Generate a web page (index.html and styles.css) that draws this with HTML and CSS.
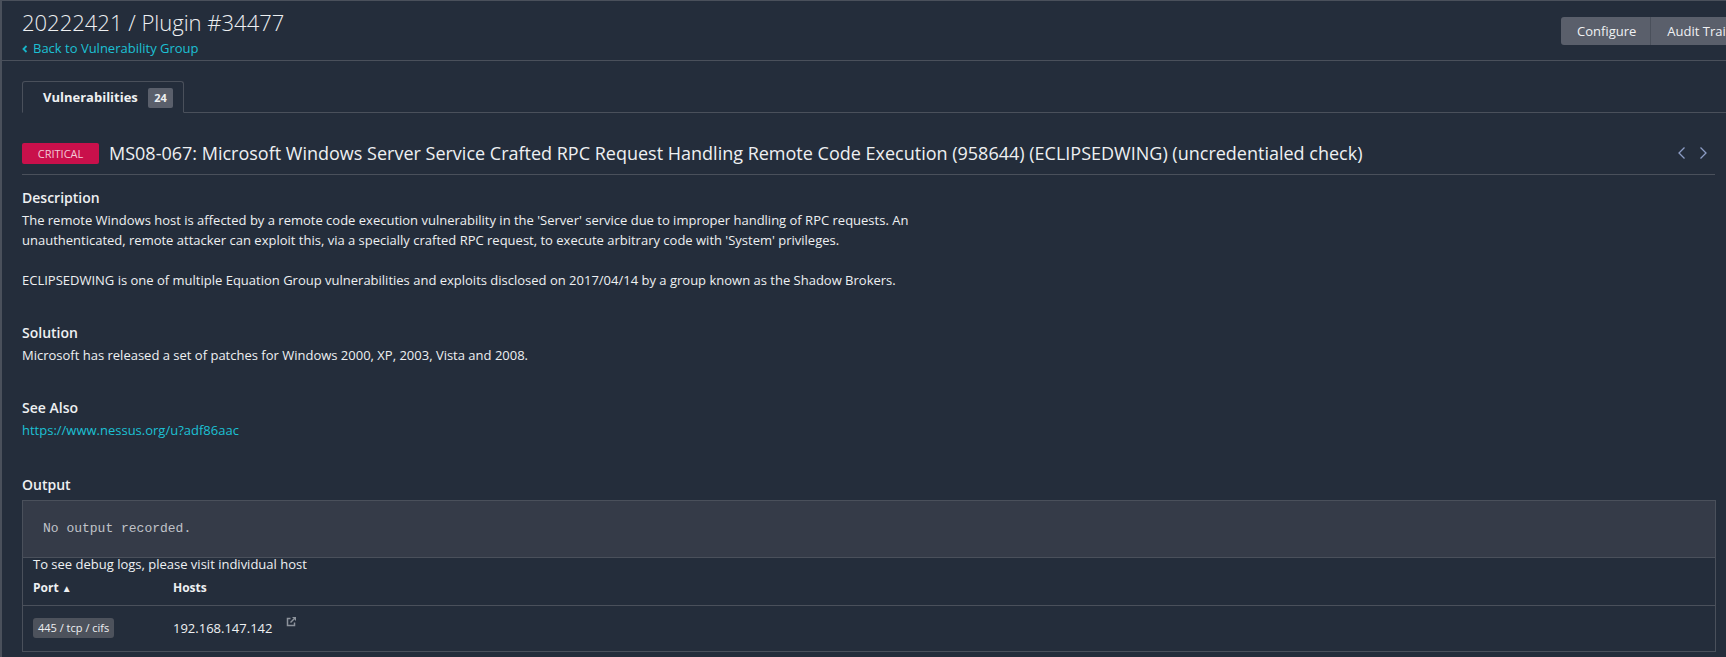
FILE: index.html
```html
<!DOCTYPE html>
<html lang="en">
<head>
    <meta charset="UTF-8">
    <title>Plugin #34477</title>
    <link rel="stylesheet" href="styles.css">
</head>
<body>

<div class="page-header">
    <div>
        <h1>20222421 / Plugin #34477</h1>
        <a class="back-link" href="#"><span class="back-arrow"><svg width="6" height="8" viewBox="0 0 6 8"><path d="M4.5 1 L1.5 4 L4.5 7" fill="none" stroke="#17b5c9" stroke-width="1.8"/></svg></span>Back to Vulnerability Group</a>
    </div>
    <div class="btn-group">
        <button class="btn">Configure</button>
        <button class="btn">Audit Trail</button>
    </div>
</div>

<div class="content">
    <div class="tabs">
        <div class="tab">Vulnerabilities <span class="tab-count">24</span></div>
    </div>

    <div class="plugin-title">
        <span class="severity">CRITICAL</span>
        <h2>MS08-067: Microsoft Windows Server Service Crafted RPC Request Handling Remote Code Execution (958644) (ECLIPSEDWING) (uncredentialed check)</h2>
        <div class="pager">
            <svg width="9" height="14" viewBox="0 0 9 14"><path d="M7.5 1.5 L2 7 L7.5 12.5" fill="none" stroke="#8c9cc4" stroke-width="1.3"/></svg>
            <svg width="9" height="14" viewBox="0 0 9 14"><path d="M1.5 1.5 L7 7 L1.5 12.5" fill="none" stroke="#8c9cc4" stroke-width="1.3"/></svg>
        </div>
    </div>

    <div class="block description">
        <h3>Description</h3>
        <p>The remote Windows host is affected by a remote code execution vulnerability in the 'Server' service due to improper handling of RPC requests. An unauthenticated, remote attacker can exploit this, via a specially crafted RPC request, to execute arbitrary code with 'System' privileges.</p>
        <p class="para-gap">ECLIPSEDWING is one of multiple Equation Group vulnerabilities and exploits disclosed on 2017/04/14 by a group known as the Shadow Brokers.</p>
    </div>

    <div class="block solution">
        <h3>Solution</h3>
        <p>Microsoft has released a set of patches for Windows 2000, XP, 2003, Vista and 2008.</p>
    </div>

    <div class="block">
        <h3>See Also</h3>
        <a class="link" href="#">https://www.nessus.org/u?adf86aac</a>
    </div>

    <div class="output-block">
        <h3>Output</h3>
        <div class="output-box">
            <pre class="output-text">No output recorded.</pre>
            <div class="debug-note">To see debug logs, please visit individual host</div>
            <div class="host-head">
                <div class="col-port">Port <span class="sort-arrow">▲</span></div>
                <div>Hosts</div>
            </div>
            <div class="host-row">
                <div class="col-port"><span class="port-tag">445 / tcp / cifs</span></div>
                <div class="host-ip">192.168.147.142</div>
                <svg class="ext-icon" width="11" height="11" viewBox="0 0 11 11"><path d="M8.5 6.5 V9.5 H1.5 V2.5 H4.5" fill="none" stroke="#8d939c" stroke-width="1.5"/><path d="M6 1 H10 V5 Z" fill="#8d939c"/><path d="M4.5 6.5 L8 3" stroke="#8d939c" stroke-width="1.5"/></svg>
            </div>
        </div>
    </div>
</div>

</body>
</html>
```

FILE: styles.css
```css
html, body {
    height: 100%;
}
body {
    margin: 0;
    background-color: #242d3b;
    border-top: 1px solid #4a505b;
    border-left: 2px solid #4a505b;
    box-sizing: border-box;
    color: #eef0f2;
    font-family: 'Open Sans', sans-serif;
    font-size: 13px;
    overflow: hidden;
}
.page-header {
    display: flex;
    justify-content: space-between;
    height: 60px;
    box-sizing: border-box;
    padding: 7px 0 0 20px;
    border-bottom: 1px solid #4a505b;
    overflow: hidden;
}
h1 {
    margin: 0;
    font-size: 22px;
    font-weight: 300;
    line-height: 28px;
    color: #eef0f2;
}
.back-link {
    display: block;
    margin-top: 3px;
    color: #1cc0d4;
    font-size: 13px;
    line-height: 18px;
    text-decoration: none;
}
.back-arrow {
    display: inline-block;
    width: 11px;
}
.btn-group {
    display: flex;
    flex-shrink: 0;
    height: 28px;
    margin: 9px -17px 0 0;
}
.btn {
    padding: 0 14px 0 16px;
    border: none;
    border-left: 1px solid #4a505b;
    background-color: #5a5f6b;
    color: #f0f1f3;
    font-family: 'Open Sans', sans-serif;
    font-size: 13px;
}
.btn:first-child {
    border-left: none;
    border-radius: 3px 0 0 3px;
}
.content {
    padding: 20px 10px 0 20px;
}
.tabs {
    height: 32px;
    box-sizing: border-box;
    border-bottom: 1px solid #4a505b;
    margin-right: -10px;
}
.tab {
    display: inline-block;
    height: 32px;
    box-sizing: border-box;
    padding: 5px 10px 0 20px;
    border: 1px solid #4a505b;
    border-bottom-color: #242d3b;
    border-radius: 3px 3px 0 0;
    background-color: #242d3b;
    font-size: 13px;
    font-weight: 700;
    line-height: 20px;
}
.tab-count {
    display: inline-block;
    margin-left: 7px;
    padding: 0 6px;
    border-radius: 2px;
    background-color: #5a5f6b;
    font-size: 11px;
    line-height: 20px;
}
.plugin-title {
    display: flex;
    align-items: center;
    height: 62px;
    box-sizing: border-box;
    padding-top: 19px;
    margin-right: 1px;
    border-bottom: 1px solid #4a505b;
}
.severity {
    flex-shrink: 0;
    width: 77px;
    height: 21px;
    margin-right: 10px;
    border-radius: 2px;
    background-color: #c9104b;
    color: #f3c9d6;
    font-size: 11px;
    line-height: 21px;
    text-align: center;
}
h2 {
    flex: 1;
    margin: 0;
    font-size: 18px;
    font-weight: 400;
    white-space: nowrap;
}
.pager {
    display: flex;
    gap: 13px;
    padding: 0 7px 0 0;
}
.block {
    margin-top: 13px;
    margin-bottom: 35px;
    max-width: 920px;
}
.description {
    margin-bottom: 33px;
}
.solution {
    margin-bottom: 33px;
}
h3 {
    margin: 0;
    font-size: 14px;
    font-weight: 600;
    line-height: 20px;
}
p {
    margin: 2px 0 0;
    line-height: 20px;
}
.para-gap {
    margin-top: 20px;
}
.link {
    display: block;
    margin-top: 2px;
    color: #1cc0d4;
    line-height: 20px;
    text-decoration: none;
}
.output-box {
    margin-top: 5px;
    border: 1px solid #4a505b;
}
.output-text {
    height: 57px;
    box-sizing: border-box;
    margin: 0;
    padding: 18px 20px 0;
    border-bottom: 1px solid #4a505b;
    background-color: #353b48;
    color: #c0c3c9;
    font-family: 'Liberation Mono', monospace;
    font-size: 13px;
    line-height: 20px;
}
.debug-note {
    padding: 0 10px;
    line-height: 13px;
}
.host-head {
    display: flex;
    align-items: center;
    height: 35px;
    box-sizing: border-box;
    padding: 0 10px 1px;
    border-bottom: 1px solid #4a505b;
    font-size: 12px;
    font-weight: 700;
}
.col-port {
    width: 140px;
}
.sort-arrow {
    font-size: 10px;
}
.host-row {
    display: flex;
    align-items: center;
    height: 45px;
    box-sizing: border-box;
    padding: 0 10px 2px;
}
.port-tag {
    display: inline-block;
    padding: 0 5px;
    border-radius: 3px;
    background-color: #4d525c;
    font-size: 11px;
    line-height: 20px;
}
.ext-icon {
    margin: -12px 0 0 14px;
}
```
